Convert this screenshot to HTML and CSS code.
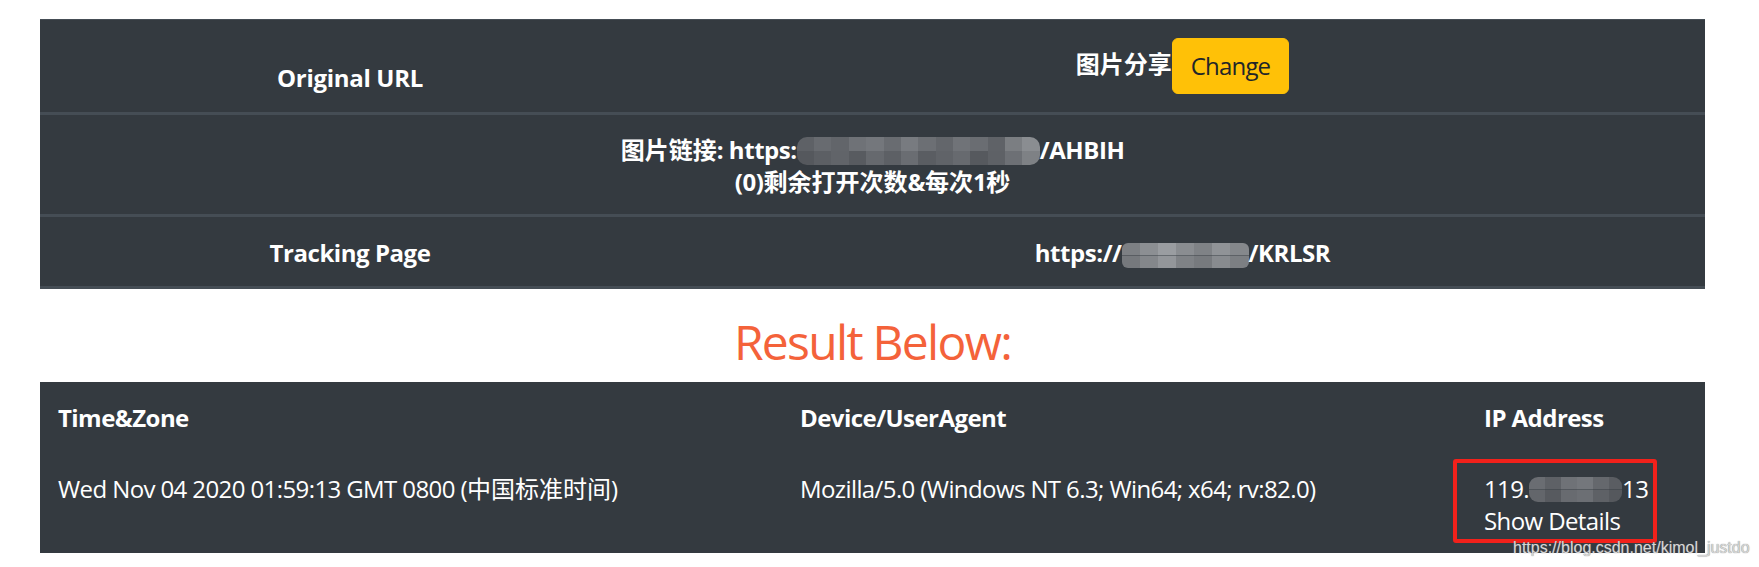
FILE: index.html
```html
<!DOCTYPE html>
<html lang="zh-CN">
<head>
<meta charset="utf-8">
<title>Tracking</title>
<link rel="stylesheet" href="styles.css">
</head>
<body>
<div class="page">
  <table class="info">
    <colgroup><col class="info-c1"><col></colgroup>
    <tr>
      <th class="label-bottom">Original URL</th>
      <td class="share-cell">
        <div class="share">
          <span class="cjk share-label">图片分享</span><button class="btn-change">Change</button>
        </div>
      </td>
    </tr>
    <tr>
      <td colspan="2" class="link-cell">
        <div><span class="cjk">图片链接</span>: https:<span class="blur blur-a"></span>/AHBIH</div>
        <div>(0)<span class="cjk">剩余打开次数</span>&amp;<span class="cjk">每次</span>1<span class="cjk">秒</span></div>
      </td>
    </tr>
    <tr>
      <th class="track-cell">Tracking Page</th>
      <td class="track-cell">https://<span class="blur blur-b"></span>/KRLSR</td>
    </tr>
  </table>

  <h2 class="result-title">Result Below:</h2>

  <table class="results">
    <colgroup><col class="res-c1"><col class="res-c2"><col></colgroup>
    <thead>
      <tr>
        <th>Time&amp;Zone</th>
        <th>Device/UserAgent</th>
        <th>IP Address</th>
      </tr>
    </thead>
    <tbody>
      <tr>
        <td>Wed Nov 04 2020 01:59:13 GMT 0800 (<span class="cjk">中国标准时间</span>)</td>
        <td>Mozilla/5.0 (Windows NT 6.3; Win64; x64; rv:82.0)</td>
        <td>
          <div>119.<span class="blur blur-c"></span>13</div>
          <div>Show Details</div>
        </td>
      </tr>
    </tbody>
  </table>

  <div class="mark-box"></div>
  <div class="watermark">https://blog.csdn.net/kimol_justdo</div>
</div>
</body>
</html>
```

FILE: styles.css
```css
* {
  box-sizing: border-box;
}

body {
  margin: 0;
  background: #ffffff;
  font-family: "Open Sans", "Noto Sans CJK SC", sans-serif;
  font-size: 24px;
  line-height: 32px;
  color: #212529;
}

.page {
  position: relative;
  height: 567px;
  padding: 19px 54px 0 40px;
  overflow: hidden;
}

table {
  width: 100%;
  table-layout: fixed;
  border-collapse: separate;
  border-spacing: 0;
  background: #343a40;
  color: #ffffff;
}

.cjk {
  letter-spacing: 0;
}

/* ---------- top info table ---------- */
.info {
  border-top: 1px solid #454d55;
}

.info-c1 {
  width: 620px;
}

.info th,
.info td {
  font-weight: 700;
  letter-spacing: -0.45px;
  text-align: center;
  border-bottom: 3px solid #454d55;
  padding: 18px;
  vertical-align: top;
}

.info .label-bottom {
  vertical-align: bottom;
  padding-bottom: 18px;
  letter-spacing: -0.3px;
}

.share {
  display: flex;
  justify-content: center;
  align-items: center;
}

.share-label {
  margin-bottom: 4px;
}

.btn-change {
  font-family: "Open Sans", "Noto Sans CJK SC", sans-serif;
  font-size: 24px;
  font-weight: 400;
  line-height: 36px;
  letter-spacing: -0.8px;
  color: #212529;
  background: #ffc107;
  border: 1px solid #ffc107;
  border-radius: 6px;
  padding: 9px 18px;
  margin: 0;
}

.info .link-cell {
  padding-top: 19px;
  padding-bottom: 16px;
}

.info .track-cell {
  padding-top: 20px;
  padding-bottom: 17px;
}

/* ---------- blurred (mosaic) fragments ---------- */
.blur {
  display: inline-block;
  border-radius: 10px;
  background-repeat: no-repeat;
  background-size: 100% 50%, 100% 50%;
  background-position: top left, bottom left;
}

.blur-a {
  width: 243px;
  height: 28px;
  vertical-align: -6px;
  background-image:
    linear-gradient(90deg, #5e6166 0 17px, #686b70 17px 34px, #62656a 34px 52px, #6f7277 52px 69px, #74777c 69px 87px, #696c71 87px 104px, #787b80 104px 121px, #6c6f74 121px 139px, #63666b 139px 156px, #707378 156px 173px, #6a6d72 173px 191px, #5f6267 191px 208px, #7b7e82 208px 225px, #8a8d91 225px 243px),
    linear-gradient(90deg, #55585d 0 17px, #5c5f64 17px 34px, #616469 34px 52px, #585b60 52px 69px, #66696e 69px 87px, #5d6065 87px 104px, #6a6d72 104px 121px, #5a5d62 121px 139px, #606368 139px 156px, #676a6f 156px 173px, #56595e 173px 191px, #5e6166 191px 208px, #6d7075 208px 225px, #7e8185 225px 243px);
}

.blur-b {
  width: 127px;
  height: 25px;
  vertical-align: -6px;
  border-radius: 6px;
  background-image:
    linear-gradient(90deg, #7d8084 0 18px, #8c8f93 18px 36px, #9a9da1 36px 54px, #8a8d91 54px 72px, #7f8286 72px 90px, #909397 90px 108px, #85888c 108px 127px),
    linear-gradient(90deg, #76797d 0 18px, #84878b 18px 36px, #93969a 36px 54px, #7f8286 54px 72px, #777a7e 72px 90px, #888b8f 90px 108px, #7c7f83 108px 127px);
}

.blur-c {
  width: 93px;
  height: 25px;
  vertical-align: -4px;
  border-radius: 9px;
  background-image:
    linear-gradient(90deg, #6a6d72 0 16px, #5e6166 16px 32px, #6f7277 32px 48px, #74777c 48px 64px, #65686d 64px 80px, #5a5d62 80px 93px),
    linear-gradient(90deg, #63666b 0 16px, #575a5f 16px 32px, #686b70 32px 48px, #6c6f74 48px 64px, #5e6166 64px 80px, #55585d 80px 93px);
}

/* ---------- heading ---------- */
.result-title {
  margin: 24px 0 11px;
  font-size: 48px;
  line-height: 58px;
  font-weight: 400;
  letter-spacing: -1.7px;
  text-align: center;
  color: #f4623a;
}

/* ---------- results table ---------- */
.res-c1 {
  width: 742px;
}

.res-c2 {
  width: 684px;
}

.results th,
.results td {
  text-align: left;
  vertical-align: top;
}

.results th {
  font-weight: 700;
  letter-spacing: -0.55px;
  padding: 20px 18px 18px;
}

.results td {
  font-weight: 400;
  letter-spacing: -0.6px;
  padding: 21px 18px 16px;
}

/* ---------- annotation overlays ---------- */
.mark-box {
  position: absolute;
  left: 1453px;
  top: 459px;
  width: 204px;
  height: 84px;
  border: 4px solid #f2211b;
  border-radius: 3px;
}

.watermark {
  position: absolute;
  left: 1513px;
  top: 539px;
  font-family: "Liberation Sans", Arial, sans-serif;
  font-size: 16px;
  line-height: 18px;
  color: #d6d6d6;
  text-shadow: 0 0 1px #6f6f6f;
  white-space: nowrap;
}
```
